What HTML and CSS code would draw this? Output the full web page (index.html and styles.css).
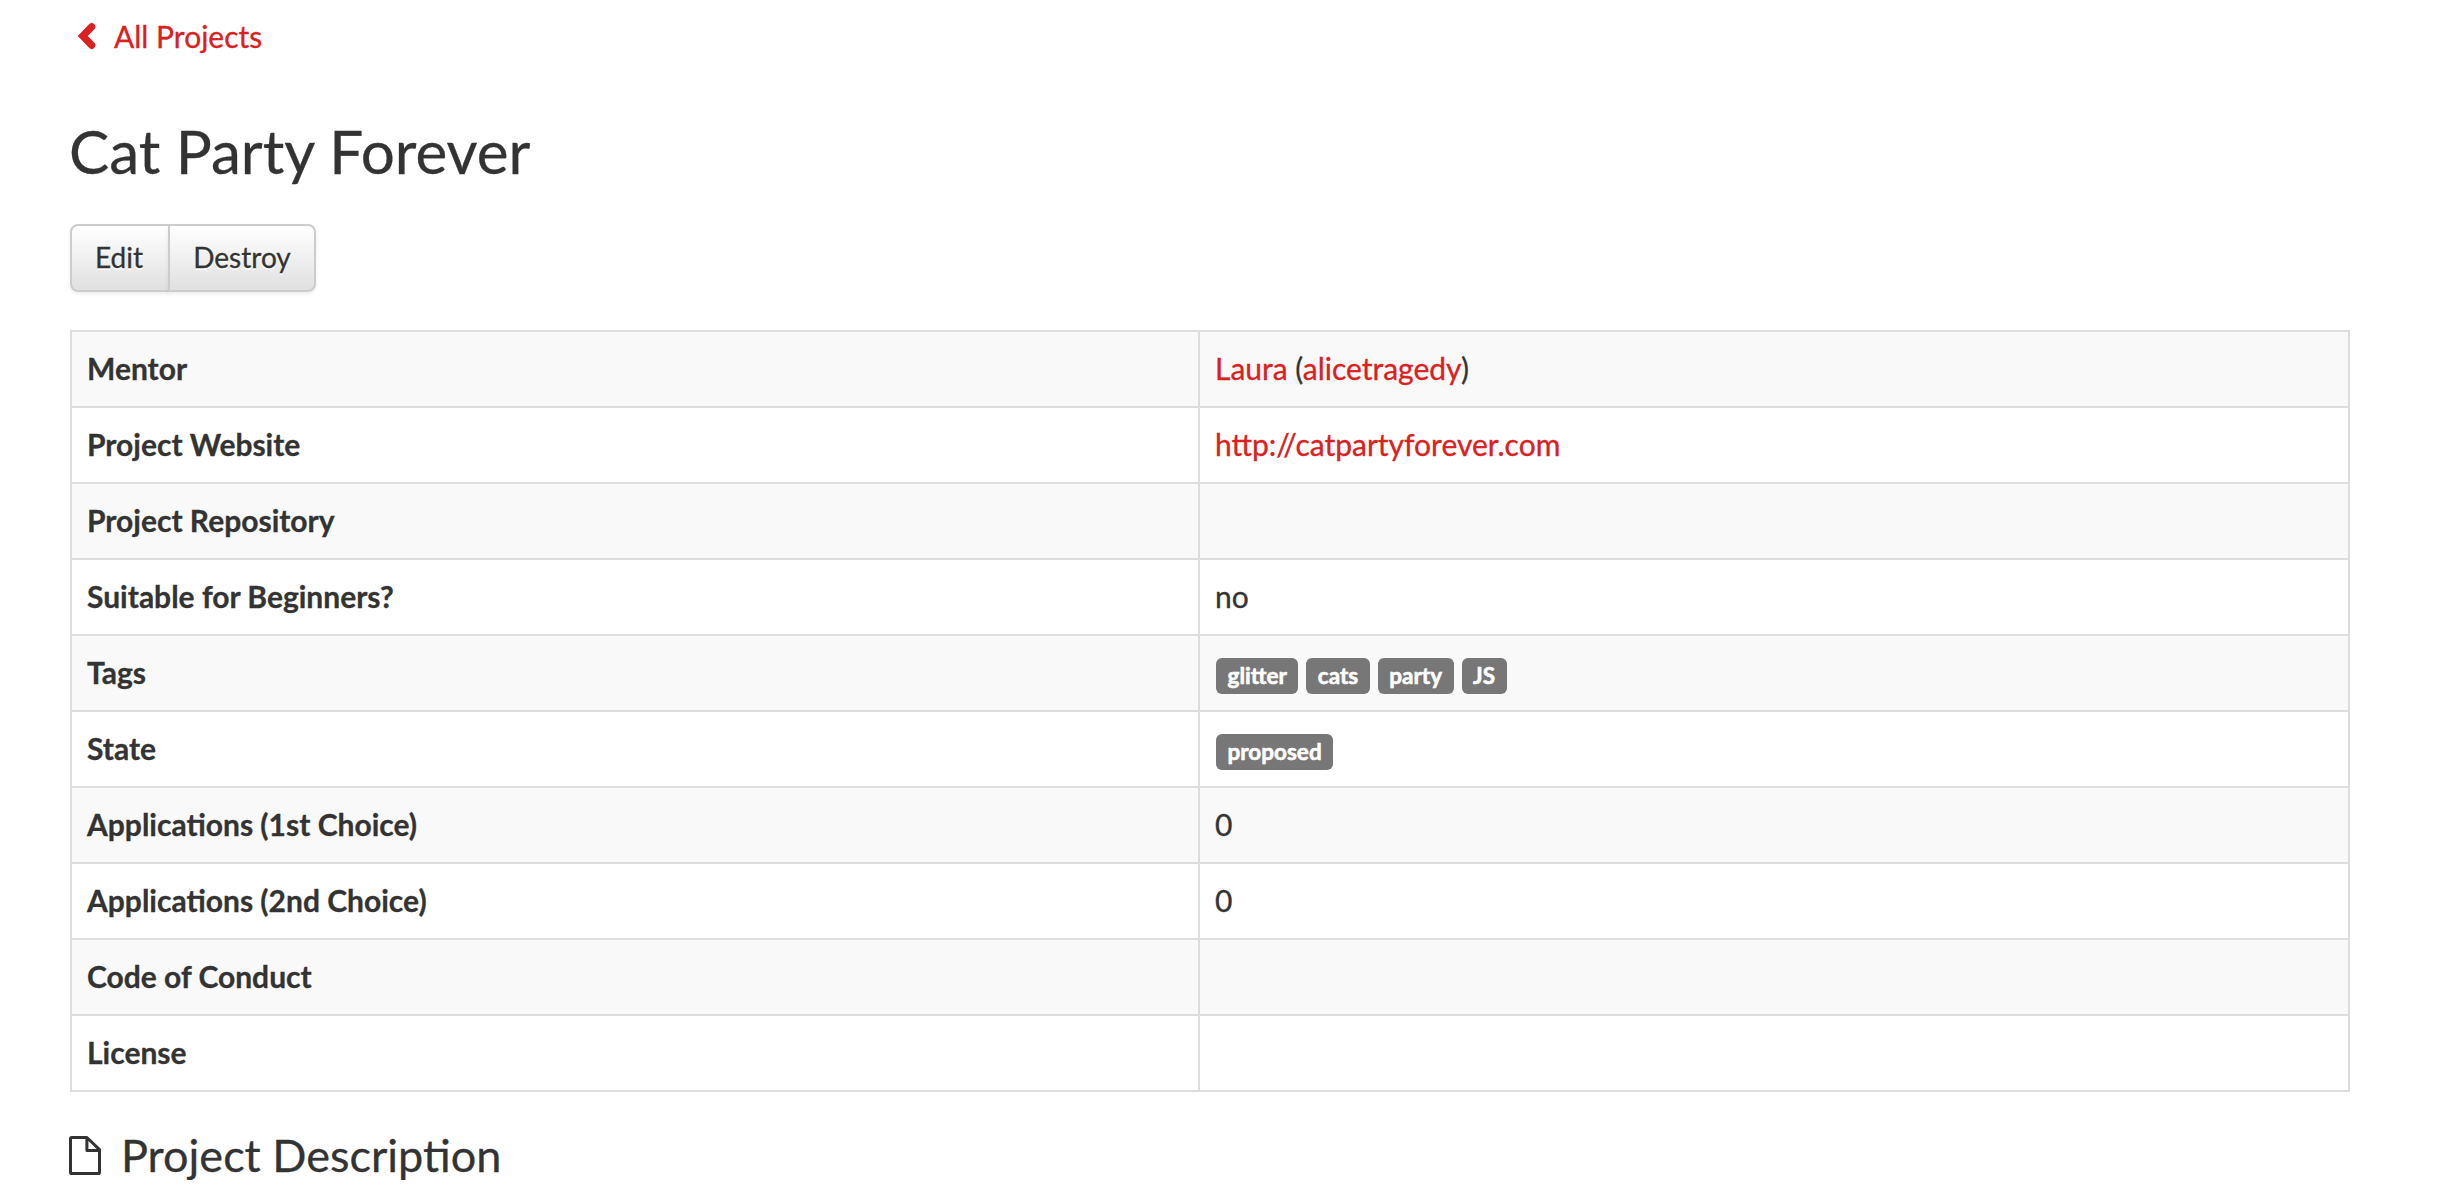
FILE: index.html
```html
<!DOCTYPE html>
<html lang="en">
<head>
<meta charset="utf-8">
<title>Cat Party Forever</title>
<link rel="stylesheet" href="styles.css">
</head>
<body>
<main class="page">
  <a class="back" href="#"><svg class="chevron" viewBox="0 0 18 28"><path d="M13.7 4.7 4.8 14l8.9 9.3"/></svg>All Projects</a>
  <h1 class="title">Cat Party Forever</h1>
  <div class="actions"><a class="btn btn-edit" href="#">Edit</a><a class="btn btn-destroy" href="#">Destroy</a></div>
  <table class="details">
    <tr><th>Mentor</th><td><a href="#">Laura</a> (<a href="#">alicetragedy</a>)</td></tr>
    <tr><th>Project Website</th><td><a href="#">http://catpartyforever.com</a></td></tr>
    <tr><th>Project Repository</th><td></td></tr>
    <tr><th>Suitable for Beginners?</th><td>no</td></tr>
    <tr><th>Tags</th><td><div class="labels"><span class="label">glitter</span><span class="label">cats</span><span class="label">party</span><span class="label">JS</span></div></td></tr>
    <tr><th>State</th><td><div class="labels"><span class="label">proposed</span></div></td></tr>
    <tr><th>Applications (1st Choice)</th><td>0</td></tr>
    <tr><th>Applications (2nd Choice)</th><td>0</td></tr>
    <tr><th>Code of Conduct</th><td></td></tr>
    <tr><th>License</th><td></td></tr>
  </table>
  <h2 class="section"><svg class="file" viewBox="0 0 32 39"><path d="M2.5 1.5h15.4L30.5 13.6v22.6q0 1.3-1.3 1.3H2.8q-1.3 0-1.3-1.3V2.8q0-1.3 1.3-1.3zM17.9 1.8v12.6h12.4"/></svg>Project Description</h2>
</main>
</body>
</html>
```
FILE: styles.css
```css
* { box-sizing: border-box; }
body {
  margin: 0;
  background: #fff;
  color: #333;
  font: 30px/42px Lato, "Liberation Sans", sans-serif;
  -webkit-text-stroke-width: .3px;
  overflow: hidden;
}
a { color: #da2020; text-decoration: none; }
.page { padding: 15px 104px 0 70px; }
.back { display: flex; align-items: center; height: 42px; padding-left: 8px; }
.chevron { width: 18px; height: 28px; margin-right: 18px; fill: none; stroke: #da2020; stroke-width: 7.2; stroke-linecap: round; }
.title { margin: 61px 0 0 -1px; font-size: 60.2px; line-height: 66px; font-weight: 400; }
.actions { display: flex; margin: 40px 0 38px; }
.btn {
  height: 68px;
  padding: 11px 0;
  border: 2px solid #ccc;
  background: linear-gradient(#fff, #e0e0e0);
  box-shadow: 0 2px 4px rgba(0, 0, 0, .075);
  color: #333;
  font-size: 28px;
  line-height: 40px;
  text-align: center;
  text-shadow: 0 2px 0 #fff;
}
.btn-edit { width: 100px; padding-right: 2px; border-radius: 8px 0 0 8px; }
.btn-destroy { width: 148px; margin-left: -2px; border-radius: 0 8px 8px 0; }
.details { width: 2280px; border-collapse: collapse; table-layout: fixed; }
.details tr { height: 76px; }
.details tr:nth-child(odd) { background: #f9f9f9; }
.details th, .details td { padding: 15px 16px 17px; border: 2px solid #ddd; text-align: left; vertical-align: top; }
.details th { width: 1128px; padding-left: 15px; font-weight: 700; }
.details td { padding-left: 15px; }
.labels { display: flex; gap: 8px; height: 42px; padding: 7px 0 0 1px; }
.label {
  height: 36px;
  padding: 5px 11.5px;
  border-radius: 6px;
  background: #777;
  color: #fff;
  font-size: 22.5px;
  line-height: 26px;
  font-weight: 700;
  -webkit-text-stroke-width: .6px;
}
.section { display: flex; align-items: center; margin: 38px 0 0; font-size: 45px; line-height: 50px; font-weight: 400; }
.file { width: 32px; height: 39px; margin: 1px 20px 0 -1px; fill: none; stroke: #333; stroke-width: 3; stroke-linejoin: round; }
```
